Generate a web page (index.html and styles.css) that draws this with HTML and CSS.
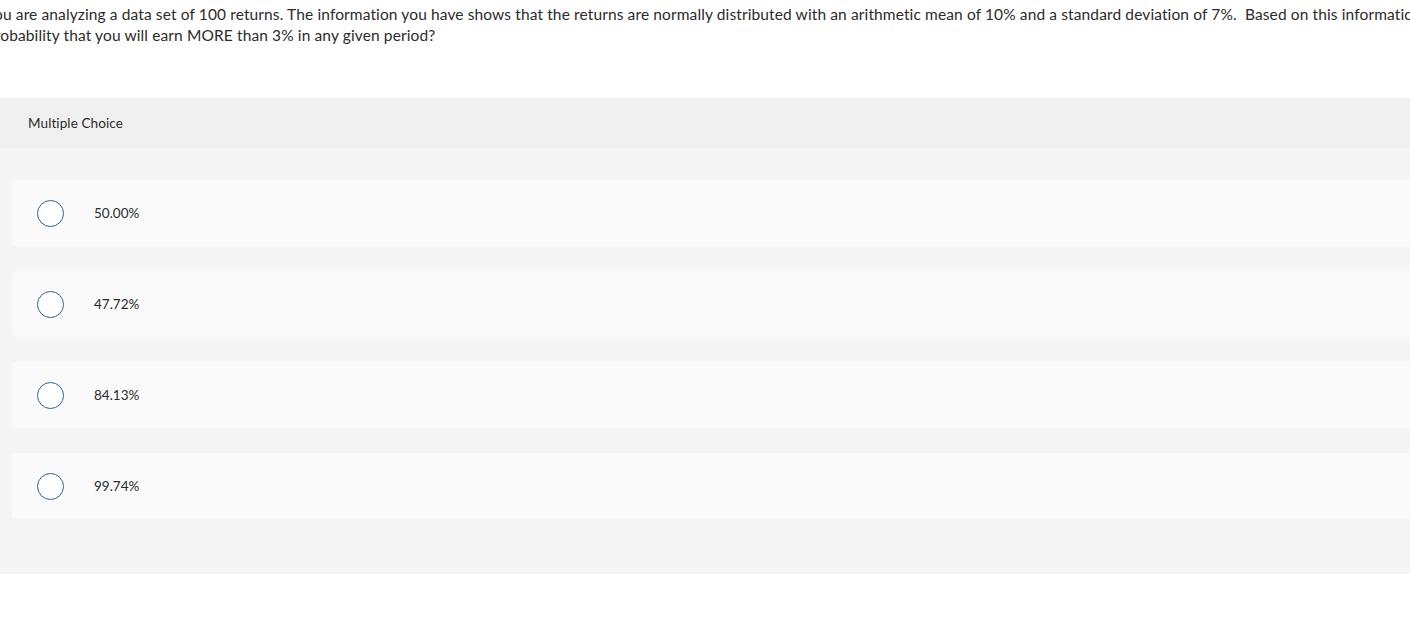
FILE: index.html
```html
<!DOCTYPE html>
<html>
<head>
<meta charset="utf-8">
<link rel="stylesheet" href="styles.css">
</head>
<body>
<div class="page">
  <p class="question">You are analyzing a data set of 100 returns. The information you have shows that the returns are normally distributed with an arithmetic mean of 10% and a standard deviation of 7%.&nbsp; Based on this information, what is the probability that you will earn MORE than 3% in any given period?</p>
  <section class="panel">
    <header class="panel-head">Multiple Choice</header>
    <div class="options">
      <label class="option"><span class="radio"></span><span class="opt-text">50.00%</span></label>
      <label class="option"><span class="radio"></span><span class="opt-text">47.72%</span></label>
      <label class="option"><span class="radio"></span><span class="opt-text">84.13%</span></label>
      <label class="option"><span class="radio"></span><span class="opt-text">99.74%</span></label>
    </div>
  </section>
</div>
</body>
</html>
```
FILE: styles.css
```css
html, body {
  margin: 0;
  padding: 0;
  background: #ffffff;
  overflow: hidden;
}
.page {
  width: 1460px;
  margin-left: -14px;
  font-family: "Lato", "Open Sans", sans-serif;
  color: #2b2b2b;
}
.question {
  margin: 0;
  padding: 4px 0 0 0;
  font-size: 15.5px;
  letter-spacing: 0.12px;
  line-height: 21px;
  width: 1560px;
}
.panel {
  margin-top: 52px;
  background: #f5f5f5;
  padding-bottom: 55px;
}
.panel-head {
  background: #f0f0f0;
  height: 50px;
  display: flex;
  align-items: center;
  padding-left: 42px;
  font-size: 13.5px;
  letter-spacing: 0.1px;
  color: #2b2b2b;
}
.options {
  padding: 32px 0 0 26px;
  display: flex;
  flex-direction: column;
  gap: 25px;
}
.option {
  background: #fafafa;
  border-radius: 3px;
  height: 66px;
  display: flex;
  align-items: center;
  padding-left: 25px;
}
.radio {
  width: 25px;
  height: 25px;
  border: 1.5px solid #2f5f8e;
  border-radius: 50%;
  background: #ffffff;
  flex: none;
}
.opt-text {
  margin-left: 30px;
  font-size: 13.5px;
  color: #2b2b2b;
}
```
